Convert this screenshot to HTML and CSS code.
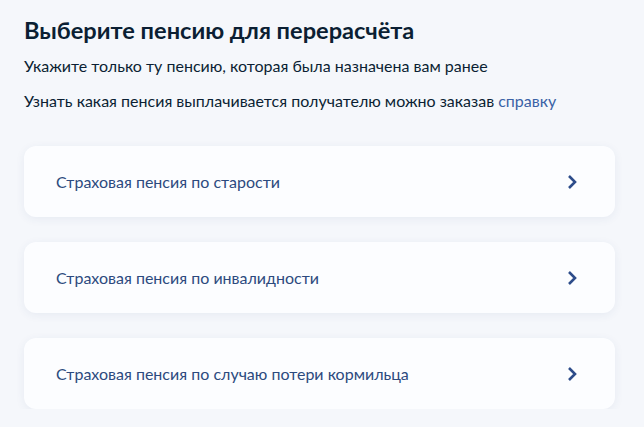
FILE: index.html
```html
<!DOCTYPE html>
<html lang="ru">
<head>
    <meta charset="UTF-8">
    <meta name="viewport" content="width=device-width, initial-scale=1.0">
    <title>Перерасчёт пенсии</title>
    <link rel="stylesheet" href="styles.css">
</head>
<body>
    <main class="page">
        <h1 class="page-title">Выберите пенсию для перерасчёта</h1>
        <p class="page-text">Укажите только ту пенсию, которая была назначена вам ранее</p>
        <p class="page-text">Узнать какая пенсия выплачивается получателю можно заказав <a href="#" class="link">справку</a></p>

        <div class="options">
            <a href="#" class="option">
                <span>Страховая пенсия по старости</span>
                <svg class="chevron" viewBox="0 0 12 16"><path d="M3 2 L9 8 L3 14" fill="none" stroke="#2d4c8a" stroke-width="2.6"/></svg>
            </a>
            <a href="#" class="option">
                <span>Страховая пенсия по инвалидности</span>
                <svg class="chevron" viewBox="0 0 12 16"><path d="M3 2 L9 8 L3 14" fill="none" stroke="#2d4c8a" stroke-width="2.6"/></svg>
            </a>
            <a href="#" class="option">
                <span>Страховая пенсия по случаю потери кормильца</span>
                <svg class="chevron" viewBox="0 0 12 16"><path d="M3 2 L9 8 L3 14" fill="none" stroke="#2d4c8a" stroke-width="2.6"/></svg>
            </a>
        </div>
    </main>
</body>
</html>
```
FILE: styles.css
```css
:root {
    --text-color: #0b1f33;
    --item-color: #2c4a7e;
    --link-color: #3a62a6;
    --bg-color: #f5f7fb;
}

* {
    margin: 0;
    padding: 0;
    box-sizing: border-box;
    font-family: Lato, "Noto Sans", sans-serif;
}

body {
    background: var(--bg-color);
    color: var(--text-color);
}

.page {
    padding: 14px 29px 0 24px;
}

.page-title {
    font-size: 23.6px;
    font-weight: bold;
    line-height: 32px;
    margin-bottom: 10px;
}

.page-text {
    font-size: 16px;
    line-height: 20px;
    margin-bottom: 15px;
}

.link {
    color: var(--link-color);
    text-decoration: none;
}

.options {
    display: flex;
    flex-direction: column;
    gap: 25px;
    margin-top: 35px;
}

.option {
    display: flex;
    justify-content: space-between;
    align-items: center;
    height: 71px;
    padding: 0 37px 0 32px;
    background: #fcfdff;
    border-radius: 12px;
    box-shadow: 0 2px 10px rgba(40, 70, 130, 0.07);
    color: var(--item-color);
    text-decoration: none;
    font-size: 16px;
}

.chevron {
    width: 12px;
    height: 16px;
}
```
